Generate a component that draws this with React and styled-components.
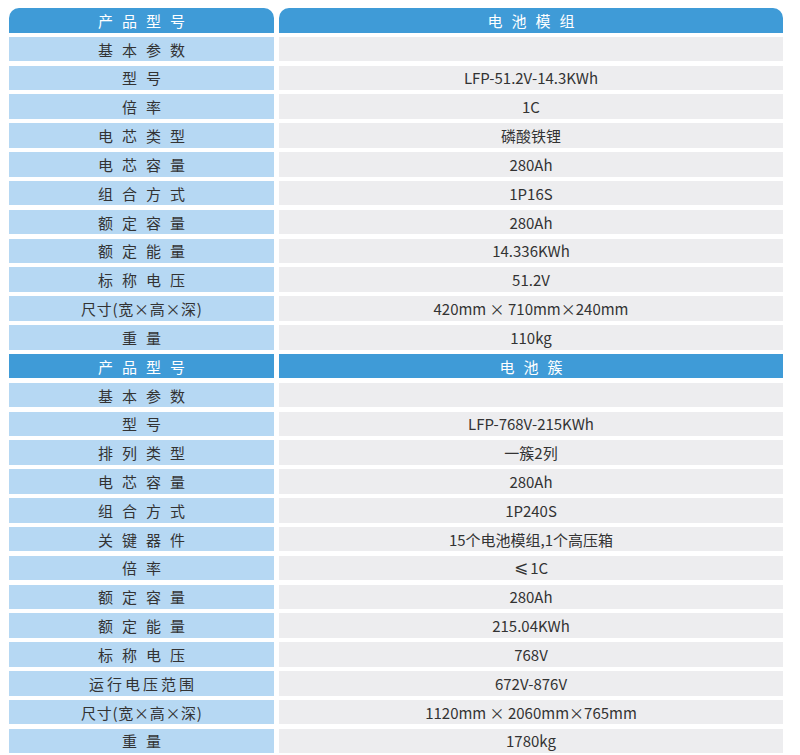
// App.jsx
import React from 'react';
import styled, { createGlobalStyle, css } from 'styled-components';

const GlobalStyle = createGlobalStyle`
  body {
    margin: 0;
    background: #ffffff;
    font-family: "Noto Sans CJK SC", "Noto Sans", sans-serif;
    color: #333333;
  }
`;

const Page = styled.div`
  width: 800px;
  padding: 8px 0 0 9px;
  box-sizing: border-box;
  display: flex;
  flex-direction: column;
  gap: 4.33px;
`;

const Grid = styled.div`
  display: grid;
  grid-template-columns: 265px 504px;
  grid-auto-rows: 24.5px;
  column-gap: 5px;
  row-gap: 4.33px;
`;

const Cell = styled.div`
  display: flex;
  align-items: center;
  justify-content: center;
  font-size: 15px;
  line-height: 1;
  white-space: nowrap;
  background: ${({ side }) => (side === 'label' ? '#b6d8f3' : '#ededef')};
  ${({ spacing }) =>
    spacing &&
    css`
      letter-spacing: ${spacing}px;
      padding-left: ${spacing}px;
    `}
`;

const HeadCell = styled(Cell)`
  background: #3f9bd7;
  color: #ffffff;
  letter-spacing: 9px;
  padding-left: 9px;
  ${({ rounded }) =>
    rounded &&
    css`
      border-radius: 10px 10px 0 0;
    `}
`;

const Symbol = styled.span`
  font-family: "DejaVu Sans", sans-serif;
  font-size: 17px;
  margin-right: 2px;
`;

const moduleRows = [
  ['基本参数', '', 9],
  ['型号', 'LFP-51.2V-14.3KWh', 9],
  ['倍率', '1C', 9],
  ['电芯类型', '磷酸铁锂', 9],
  ['电芯容量', '280Ah', 9],
  ['组合方式', '1P16S', 9],
  ['额定容量', '280Ah', 9],
  ['额定能量', '14.336KWh', 9],
  ['标称电压', '51.2V', 9],
  ['尺寸(宽×高×深)', '420mm × 710mm×240mm', 0.7],
  ['重量', '110kg', 9],
];

const clusterRows = [
  ['基本参数', '', 9],
  ['型号', 'LFP-768V-215KWh', 9],
  ['排列类型', '一簇2列', 9],
  ['电芯容量', '280Ah', 9],
  ['组合方式', '1P240S', 9],
  ['关键器件', '15个电池模组,1个高压箱', 9],
  ['倍率', 'LE1C', 9],
  ['额定容量', '280Ah', 9],
  ['额定能量', '215.04KWh', 9],
  ['标称电压', '768V', 9],
  ['运行电压范围', '672V-876V', 3],
  ['尺寸(宽×高×深)', '1120mm × 2060mm×765mm', 0.7],
  ['重量', '1780kg', 9],
];

// "LE" prefix marks a value that starts with the slanted less-or-equal sign
const renderValue = (value) =>
  value.startsWith('LE') ? (
    <>
      <Symbol>⩽</Symbol>
      {value.slice(2)}
    </>
  ) : (
    value
  );

const SpecTable = ({ title, rows, rounded }) => (
  <Grid>
    <HeadCell rounded={rounded}>产品型号</HeadCell>
    <HeadCell rounded={rounded}>{title}</HeadCell>
    {rows.map(([label, value, spacing]) => (
      <React.Fragment key={label}>
        <Cell side="label" spacing={spacing}>
          {label}
        </Cell>
        <Cell side="value">{renderValue(value)}</Cell>
      </React.Fragment>
    ))}
  </Grid>
);

const App = () => (
  <>
    <GlobalStyle />
    <Page>
      <SpecTable title="电池模组" rows={moduleRows} rounded />
      <SpecTable title="电池簇" rows={clusterRows} />
    </Page>
  </>
);

export default App;
